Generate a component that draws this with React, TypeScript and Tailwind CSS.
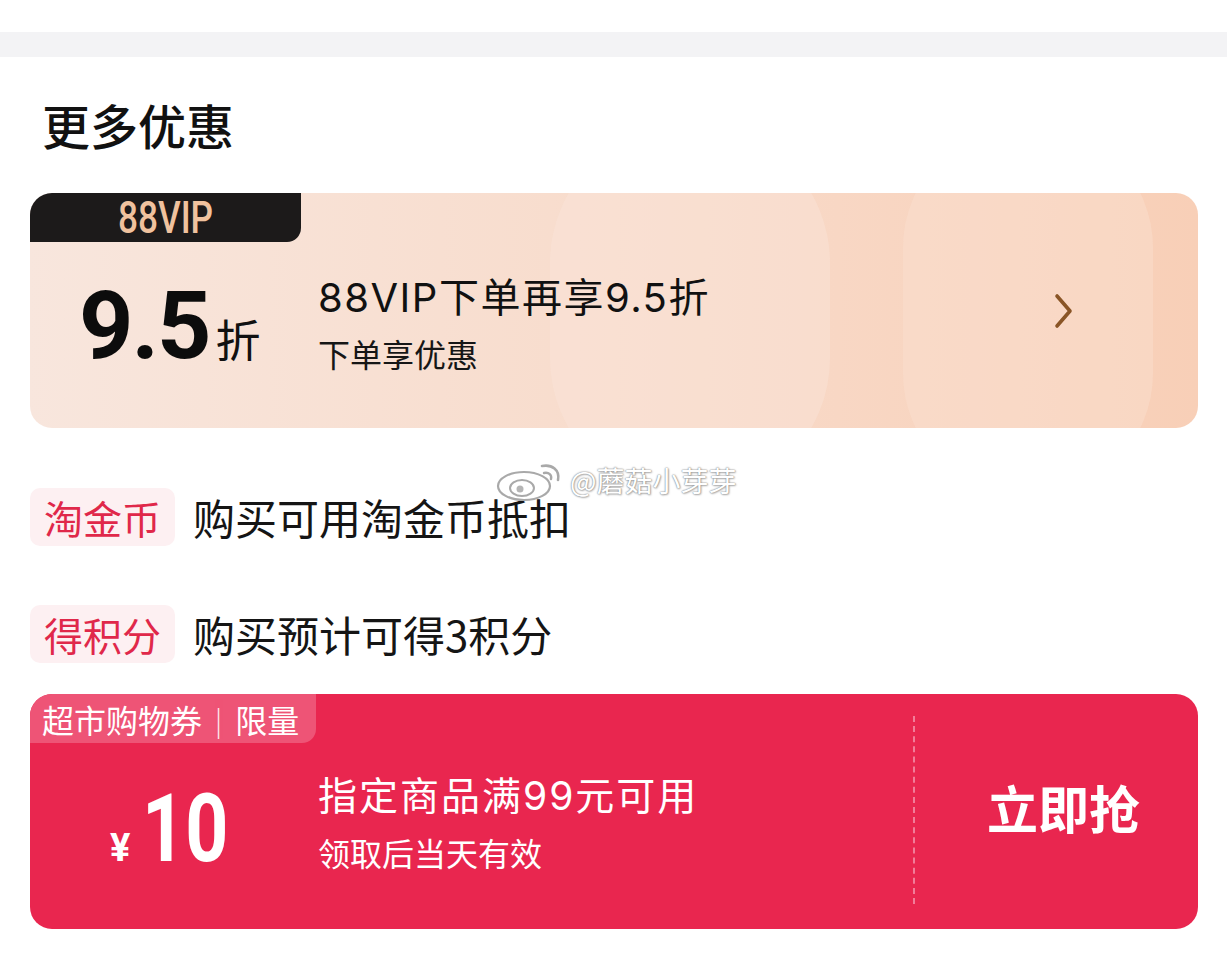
import * as React from 'react';

// --- small pieces ---
const Chevron = () => (
    <svg width="22" height="36" viewBox="0 0 22 36" fill="none">
        <path d="M5 3 L18 18 L5 33" stroke="#8a5526" strokeWidth="3.6" strokeLinecap="round" strokeLinejoin="round" />
    </svg>
);

const Tag = ({ children }: { children: React.ReactNode }) => (
    <span className="inline-flex items-center h-[58px] px-[14px] rounded-[10px] bg-[#fdf0f2] text-[#e0284a] text-[39px] leading-none">
        {children}
    </span>
);

const InfoRow = ({ tag, text, className }: { tag: string; text: string; className?: string }) => (
    <div className={"flex items-center gap-[18px] " + (className ?? "")}>
        <Tag>{tag}</Tag>
        <span className="text-[42px] leading-none text-[#151515]">{text}</span>
    </div>
);

const Watermark = () => (
    <div className="absolute left-[494px] top-[458px] flex items-center gap-[2px] pointer-events-none select-none">
        <svg width="74" height="44" viewBox="0 0 74 44" fill="none">
            <ellipse cx="30" cy="28" rx="26" ry="14" fill="#ffffff" stroke="#a9a9a9" strokeWidth="2.2" />
            <ellipse cx="28" cy="30" rx="12" ry="8" fill="#ffffff" stroke="#a9a9a9" strokeWidth="2" />
            <circle cx="26" cy="31" r="3.5" fill="#b5b5b5" />
            <path d="M48 8 C58 6 66 12 64 22" stroke="#a9a9a9" strokeWidth="2.6" strokeLinecap="round" />
            <path d="M50 15 C55 14 58 17 57 21" stroke="#a9a9a9" strokeWidth="2.4" strokeLinecap="round" />
        </svg>
        <span
            className="text-[28px] leading-none text-white"
            style={{ textShadow: '0 0 2px #8c8c8c, 0 0 1px #8c8c8c, 1px 1px 2px rgba(0,0,0,0.25)' }}
        >
            @蘑菇小芽芽
        </span>
    </div>
);

// --- 88VIP card ---
const VipCard = () => (
    <div className="relative mt-[45px] h-[235px] rounded-[22px] overflow-hidden bg-gradient-to-r from-[#f8e6dd] via-[#f8dccc] to-[#f8cfb7]">
        {/* soft decorative lobes */}
        <div className="absolute left-[520px] top-[-70px] w-[280px] h-[375px] rounded-full bg-[#fae6db] opacity-40" />
        <div className="absolute left-[873px] top-[-70px] w-[250px] h-[375px] rounded-full bg-[#fadfd0] opacity-45" />

        <div className="relative flex flex-col h-full">
            <div className="w-[271px] h-[49px] bg-[#1c1a1a] rounded-br-[14px] flex items-center justify-center">
                <span className="inline-block font-['Roboto',sans-serif] font-medium text-[44px] leading-none text-[#f0c29e] scale-x-[0.8]">
                    88VIP
                </span>
            </div>
            <div className="flex-1 flex items-center pb-[20px]">
                <div className="w-[288px] pl-[49px] flex items-baseline">
                    <span className="font-['Roboto',sans-serif] font-bold text-[95px] leading-none text-[#0c0c0c] tracking-[-2px]">9.5</span>
                    <span className="ml-[6px] text-[45px] leading-none text-[#111]">折</span>
                </div>
                <div className="flex flex-col gap-[22px] font-['Inter','Noto_Sans_CJK_SC',sans-serif]">
                    <span className="text-[40px] leading-none text-[#111] tracking-[1.5px]">88VIP下单再享9.5折</span>
                    <span className="text-[32px] leading-none text-[#161616]">下单享优惠</span>
                </div>
                <div className="ml-auto mr-[124px] -translate-y-[14px]">
                    <Chevron />
                </div>
            </div>
        </div>
    </div>
);

// --- coupon card ---
const CouponCard = () => (
    <div className="mt-[31px] h-[235px] rounded-[22px] overflow-hidden bg-[#e9264f] flex">
        <div className="w-[883px] flex flex-col">
            <div className="w-[286px] h-[49px] bg-[#ee5476] rounded-br-[14px] flex items-center pl-[12px] text-white text-[32px] leading-none">
                <span>超市购物券</span>
                <span className="mx-[13px] text-[28px] font-light opacity-90">|</span>
                <span>限量</span>
            </div>
            <div className="flex-1 flex items-center pb-[26px]">
                <div className="w-[288px] pl-[80px] flex items-baseline text-white translate-y-[6px]">
                    <span className="font-['Roboto',sans-serif] font-bold text-[38px] leading-none">¥</span>
                    <span className="ml-[12px] inline-block origin-left scale-x-[0.8] font-['Roboto',sans-serif] font-bold text-[94px] leading-none">10</span>
                </div>
                <div className="flex flex-col gap-[24px] text-white font-['Inter','Noto_Sans_CJK_SC',sans-serif]">
                    <span className="text-[39px] leading-none tracking-[2px]">指定商品满99元可用</span>
                    <span className="text-[32px] leading-none">领取后当天有效</span>
                </div>
            </div>
        </div>
        <div className="py-[22px] pb-[25px] flex">
            <div className="w-0 h-full border-l-2 border-dashed border-[#f27c98]" />
        </div>
        <div className="flex-1 flex items-center justify-center pl-[14px] pb-[8px]">
            <span className="text-white text-[51px] font-bold leading-none">立即抢</span>
        </div>
    </div>
);

export default function App() {
    return (
        <div className="relative w-[1227px] h-[960px] overflow-hidden bg-white font-['Noto_Sans_CJK_SC',sans-serif]">
            <div className="h-[32px] bg-white" />
            <div className="h-[25px] bg-[#f3f3f5]" />
            <div className="pl-[30px] pr-[29px]">
                <h2 className="mt-[43px] pl-[12px] text-[48px] font-medium leading-none text-[#111]">更多优惠</h2>
                <VipCard />
                <InfoRow className="mt-[60px]" tag="淘金币" text="购买可用淘金币抵扣" />
                <InfoRow className="mt-[59px]" tag="得积分" text="购买预计可得3积分" />
                <CouponCard />
            </div>
            <Watermark />
        </div>
    );
}
